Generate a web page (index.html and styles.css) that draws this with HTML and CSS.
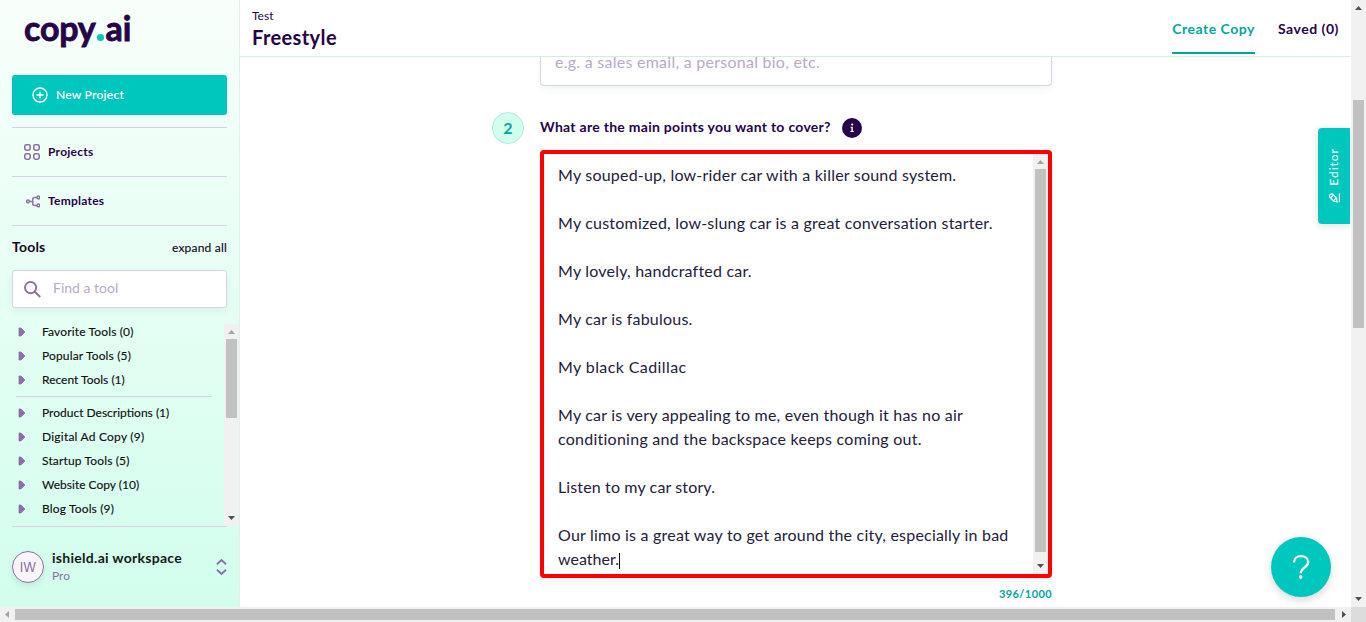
FILE: index.html
```
<!DOCTYPE html>
<html lang="en">
<head>
<meta charset="utf-8">
<title>Freestyle - copy.ai</title>
<link rel="stylesheet" href="styles.css">
</head>
<body>
<div class="window">
  <aside class="sidebar">
    <div class="logo">copy<span class="logo-dot"></span>ai</div>
    <button class="new-project">
      <svg width="16" height="16" viewBox="0 0 16 16" fill="none" stroke="#fff" stroke-width="1.4"><circle cx="8" cy="8" r="7"/><path d="M8 4.5v7M4.5 8h7"/></svg>
      <span>New Project</span>
    </button>
    <nav class="nav">
      <a class="nav-item">
        <svg width="16" height="16" viewBox="0 0 16 16" fill="none" stroke="#8b70a3" stroke-width="1.6"><rect x=".8" y=".8" width="5.4" height="5.4" rx="1.6"/><rect x="9.8" y=".8" width="5.4" height="5.4" rx="1.6"/><rect x=".8" y="9.8" width="5.4" height="5.4" rx="1.6"/><rect x="9.8" y="9.8" width="5.4" height="5.4" rx="1.6"/></svg>
        <span>Projects</span>
      </a>
      <a class="nav-item">
        <svg width="16" height="16" viewBox="0 0 16 16" fill="none" stroke="#8b70a3" stroke-width="1.5"><circle cx="4" cy="8.5" r="1.4"/><circle cx="14.3" cy="4.5" r="1.400"/><circle cx="14.3" cy="12.4" r="1.4"/><path d="M5.4 8.5h3.3M12.9 4.5h-2.2a2 2 0 0 0-2 2v3.9a2 2 0 0 0 2 2h2.2"/></svg>
        <span>Templates</span>
      </a>
    </nav>
    <div class="tools-head"><b>Tools</b><span>expand all</span></div>
    <div class="search">
      <svg width="17" height="17" viewBox="0 0 17 17" fill="none" stroke="#8b70a3" stroke-width="1.9"><circle cx="6.6" cy="6.6" r="5.6"/><path d="M10.8 10.8l5.4 5.2"/></svg>
      <span>Find a tool</span>
    </div>
    <div class="tools">
      <div class="tool-list">
        <div class="tool"><svg width="8" height="10" viewBox="0 0 8 10"><path d="M1 1v8h2l4-4-4-4z"/></svg><span>Favorite Tools (0)</span></div>
        <div class="tool"><svg width="8" height="10" viewBox="0 0 8 10"><path d="M1 1v8h2l4-4-4-4z"/></svg><span>Popular Tools (5)</span></div>
        <div class="tool"><svg width="8" height="10" viewBox="0 0 8 10"><path d="M1 1v8h2l4-4-4-4z"/></svg><span class="tight">Recent Tools (1)</span></div>
        <hr>
        <div class="tool"><svg width="8" height="10" viewBox="0 0 8 10"><path d="M1 1v8h2l4-4-4-4z"/></svg><span class="tight">Product Descriptions (1)</span></div>
        <div class="tool"><svg width="8" height="10" viewBox="0 0 8 10"><path d="M1 1v8h2l4-4-4-4z"/></svg><span class="loose">Digital Ad Copy (9)</span></div>
        <div class="tool"><svg width="8" height="10" viewBox="0 0 8 10"><path d="M1 1v8h2l4-4-4-4z"/></svg><span>Startup Tools (5)</span></div>
        <div class="tool"><svg width="8" height="10" viewBox="0 0 8 10"><path d="M1 1v8h2l4-4-4-4z"/></svg><span class="tight">Website Copy (10)</span></div>
        <div class="tool"><svg width="8" height="10" viewBox="0 0 8 10"><path d="M1 1v8h2l4-4-4-4z"/></svg><span>Blog Tools (9)</span></div>
      </div>
      <div class="vbar">
        <svg class="btn" viewBox="0 0 15 15"><path class="off" d="M4 10h7L7.5 6z"/></svg>
        <div class="thumb thumb-tools"></div>
        <svg class="btn btn-end" viewBox="0 0 15 15"><path d="M4 5h7L7.500 9z"/></svg>
      </div>
    </div>
    <div class="account">
      <div class="avatar">IW</div>
      <div class="who"><b>ishield.ai workspace</b><span>Pro</span></div>
      <svg width="11" height="18" viewBox="0 0 11 18" fill="none" stroke="#8b70a3" stroke-width="1.9"><path d="M1 6.200L5.500 2 10 6.200M1 11.800L5.500 16 10 11.800"/></svg>
    </div>
  </aside>

  <div class="page">
    <header class="topbar">
      <div class="title"><span>Test</span><h1>Freestyle</h1></div>
      <nav class="tabs"><a class="tab active">Create Copy</a><a class="tab">Saved (0)</a></nav>
    </header>
    <main class="form">
      <div class="field-one">e.g. a sales email, a personal bio, etc.</div>
      <div class="question">
        <div class="step">2</div>
        <label>What are the main points you want to cover?</label>
        <div class="info"><svg width="20" height="20" viewBox="0 0 20 20" fill="#fff"><circle cx="10.200" cy="6.500" r="1.100"/><path d="M8.600 8.700h2.200v4.200h1v1H8.400v-1h1v-3.200h-.8z"/></svg></div>
      </div>
      <div class="textarea">
        <div class="copy">
          <p>My souped-up, low-rider car with a killer sound system.</p>
          <p>My customized, low-slung car is a great conversation starter.</p>
          <p>My lovely, handcrafted car.</p>
          <p>My car is fabulous.</p>
          <p class="wide">My black Cadillac</p>
          <p>My car is very appealing to me, even though it has no air<br><span class="mid">conditioning and the backspace keeps coming out.</span></p>
          <p class="narrow">Listen to my car story.</p>
          <p>Our limo is a great way to get around the city, especially in bad<br><span class="weather">weather.</span><span class="caret"></span></p>
        </div>
        <div class="vbar">
          <svg class="btn" viewBox="0 0 15 15"><path class="off" d="M4 10h7L7.5 6z"/></svg>
          <div class="thumb thumb-text"></div>
          <svg class="btn btn-end" viewBox="0 0 15 15"><path d="M4 5h7L7.500 9z"/></svg>
        </div>
      </div>
      <div class="counter">396/1000</div>
    </main>
    <div class="editor">
      <span>Editor</span>
      <svg width="13" height="12" viewBox="0 0 13 12" fill="none" stroke="#fff" stroke-width="1.200"><path d="M11.400 1.500v8.700M9 9.900l-3.600-.9-3.600-3.800c-1.300-1.900 1.200-4.300 3-3l3.700 3.900z"/><path d="M2.600 5.900l3-3.100M5.400 8.900l3-3"/></svg>
    </div>
    <div class="help"><svg width="60" height="60" viewBox="0 0 60 60"><path d="M23 25.500c0-4 3-6.300 7-6.300s7.200 2.300 7.200 6.100c0 5.700-7.400 4.800-7.400 11" fill="none" stroke="#fff" stroke-width="2.300"/><circle cx="29.700" cy="40.100" r="1.800" fill="#fff"/></svg></div>
  </div>

  <div class="vbar window-vbar">
    <svg class="btn" viewBox="0 0 15 15"><path d="M4 10h7L7.5 6z"/></svg>
    <div class="thumb thumb-window"></div>
    <svg class="btn btn-end" viewBox="0 0 15 15"><path d="M4 5h7L7.500 9z"/></svg>
  </div>
  <div class="hbar">
    <svg class="btn" viewBox="0 0 15 15"><path class="off" d="M9 4v7L5 7.500z"/></svg>
    <div class="hthumb"></div>
    <svg class="btn" viewBox="0 0 15 15"><path d="M6 4v7l4-3.500z"/></svg>
  </div>
  <div class="corner"></div>
</div>
</body>
</html>
```
FILE: styles.css
```
* { box-sizing: border-box; }
body { margin: 0; font-family: Lato, "Liberation Sans", sans-serif; font-size: 12px; color: #111; overflow: hidden; }
svg { display: block; flex: none; }
.window { display: grid; grid-template-columns: 240px 1fr 15px; grid-template-rows: 607px 15px; width: 1366px; height: 622px; background: #fff; }

/* Sidebar */
.sidebar { display: flex; flex-direction: column; height: 607px; padding: 0 0 0 12px; background: linear-gradient(#f8fffb, #d2feee); border-right: 1px solid #dff2ea; }
.logo { height: 75px; padding: 7px 0 0 12px; font-size: 34px; line-height: 42px; font-weight: 700; color: #25044a; -webkit-text-stroke: .8px #25044a; letter-spacing: -.2px; }
.logo-dot { display: inline-block; width: 7px; height: 7px; margin: 0 2px 0 1px; border-radius: 50%; background: #00c7be; }
.new-project { display: flex; align-items: center; gap: 8px; width: 215px; height: 40px; padding: 0 20px; border: 0; border-radius: 3px; background: #00c7be; color: #fff; font: 600 12px Lato, sans-serif; letter-spacing: .24px; }
.new-project span, .nav-item span, .search span, .tool span { padding-bottom: 2px; }
.nav { width: 215px; margin-top: 12px; }
.nav-item { display: flex; align-items: center; gap: 8px; height: 49px; padding-left: 12px; border-top: 1px solid #dacfe4; color: #25044a; font-weight: 700; letter-spacing: .25px; }
.nav-item:last-child { height: 50px; border-bottom: 1px solid #dacfe4; }
.tools-head { display: flex; justify-content: space-between; align-items: center; width: 215px; height: 44px; padding-bottom: 2px; letter-spacing: .2px; color: #150a20; }
.tools-head b { padding-bottom: 1px; font-size: 14px; }
.tools-head span, .tool { -webkit-text-stroke: .15px currentColor; }
.search { display: flex; align-items: center; gap: 12px; width: 215px; height: 38px; padding: 0 11px; border: 1px solid #dacfe4; border-radius: 3px; background: #fff; box-shadow: 0 3px 8px rgba(0, 60, 60, .06); color: #b9a9c7; font-size: 14px; }
.search span { padding-bottom: 3px; }
.tools { display: flex; justify-content: space-between; height: 202px; margin-top: 16px; }
.tool-list { width: 200px; padding-left: 4px; margin-top: -4px; }
.tool { display: flex; align-items: center; height: 24px; gap: 16px; padding-left: 2px; letter-spacing: .15px; white-space: nowrap; }
.tool svg { fill: #8b70a3; stroke: #8b70a3; stroke-width: .8; stroke-linejoin: round; }
.tool .tight { letter-spacing: 0; }
.tool .loose { letter-spacing: .22px; }
.tool-list hr { width: 196px; height: 1px; margin: 4px 0; border: 0; background: #dacfe4; }
.account { display: flex; align-items: center; width: 215px; height: 81px; border-top: 1px solid #dacfe4; }
.avatar { width: 32px; height: 32px; border: 1px solid #8b70a3; border-radius: 50%; background: #f7f5f8; color: #8b70a3; font: 13px/31px Inter, sans-serif; text-align: center; box-shadow: 0 3px 6px rgba(0, 60, 60, .1); }
.who { flex: 1; display: flex; flex-direction: column; padding-left: 8px; }
.who b { font-size: 14px; line-height: 18px; letter-spacing: .28px; color: #111b17; }
.who span { line-height: 18px; color: #8b70a3; }

/* Scrollbars */
.vbar { display: flex; flex-direction: column; align-items: center; width: 15px; background: #f1f1f1; }
.btn { width: 15px; height: 15px; fill: #505050; }
.btn .off { fill: #a3a3a3; }
.btn-end { margin-top: auto; }
.thumb { width: 11px; background: #c1c1c1; }
.thumb-tools { height: 79px; }
.thumb-text { height: 383px; }
.thumb-window { height: 228px; margin-top: 85px; }
.hbar { grid-column: 1 / 3; display: flex; align-items: center; background: #f1f1f1; }
.hthumb { flex: 1; height: 11px; margin-right: 1px; background: #c1c1c1; }
.corner { background: #dcdcdc; }

/* Page */
.page { position: relative; height: 607px; overflow: hidden; }
.topbar { display: flex; justify-content: space-between; height: 57px; padding: 0 12px; border-bottom: 1px solid #d6f0e1; color: #25044a; }
.title span { display: block; margin-top: 8px; line-height: 16px; }
.title h1 { margin: 0; font-size: 20px; line-height: 27px; letter-spacing: .39px; }
.tabs { display: flex; gap: 23px; }
.tab { height: 54px; font-size: 14px; font-weight: 700; line-height: 57px; letter-spacing: .52px; }
.tab.active { color: #00a69c; border-bottom: 2px solid #00a69c; }
.form { width: 560px; margin-left: 252px; padding-left: 48px; }
.field-one { width: 512px; height: 29px; padding: 0 14px; border: 1px solid #dacfe4; border-top: 0; border-radius: 0 0 4px 4px; box-shadow: 0 3px 8px rgba(0, 60, 60, .06); color: #b9a9c7; font-size: 16px; line-height: 10px; letter-spacing: .26px; }
.question { display: flex; align-items: center; height: 32px; margin: 26px 0 6px -48px; }
.step { width: 32px; height: 32px; margin-right: 16px; border: 1px solid #b1ebe1; border-radius: 50%; background: #d2feee; color: #00a69c; font: 700 16px/29px Lato, sans-serif; text-align: center; }
.question label { padding-bottom: 3px; color: #25044a; font-size: 14px; font-weight: 700; letter-spacing: .28px; }
.info { width: 20px; height: 20px; margin-left: 11px; border-radius: 50%; background: #25044a; }
.textarea { display: flex; justify-content: space-between; width: 512px; height: 428px; border: 4px solid #f00; border-radius: 4px; background: #fff; box-shadow: 0 3px 8px rgba(0, 60, 60, .06); }
.copy { padding: 9px 0 0 14px; color: #23203a; font-size: 16px; line-height: 24px; letter-spacing: .21px; white-space: nowrap; }
.copy p { margin: 0 0 24px; }
.copy .wide { letter-spacing: .4px; }
.copy .mid { letter-spacing: .25px; }
.copy .narrow { letter-spacing: .13px; }
.copy .weather { letter-spacing: .02px; }
.caret { display: inline-block; width: 1px; height: 16px; background: #111; vertical-align: -4px; }
.counter { width: 512px; margin-top: 8px; color: #00a69c; font-size: 11px; font-weight: 700; line-height: 16px; letter-spacing: .4px; text-align: right; }

/* Controls that float over the page */
.editor { position: absolute; right: 1px; top: 128px; display: flex; flex-direction: column; align-items: center; justify-content: center; gap: 6px; width: 32px; height: 96px; border-radius: 4px 0 0 4px; background: #00c7be; color: #fff; box-shadow: 0 2px 8px rgba(0, 0, 0, .12); }
.editor span { margin-right: 2px; writing-mode: vertical-rl; transform: rotate(180deg); letter-spacing: 1px; }
.help { position: absolute; right: 20px; top: 537px; width: 60px; height: 60px; border-radius: 50%; background: #00c7be; box-shadow: 0 3px 8px rgba(0, 0, 0, .16); }
```
